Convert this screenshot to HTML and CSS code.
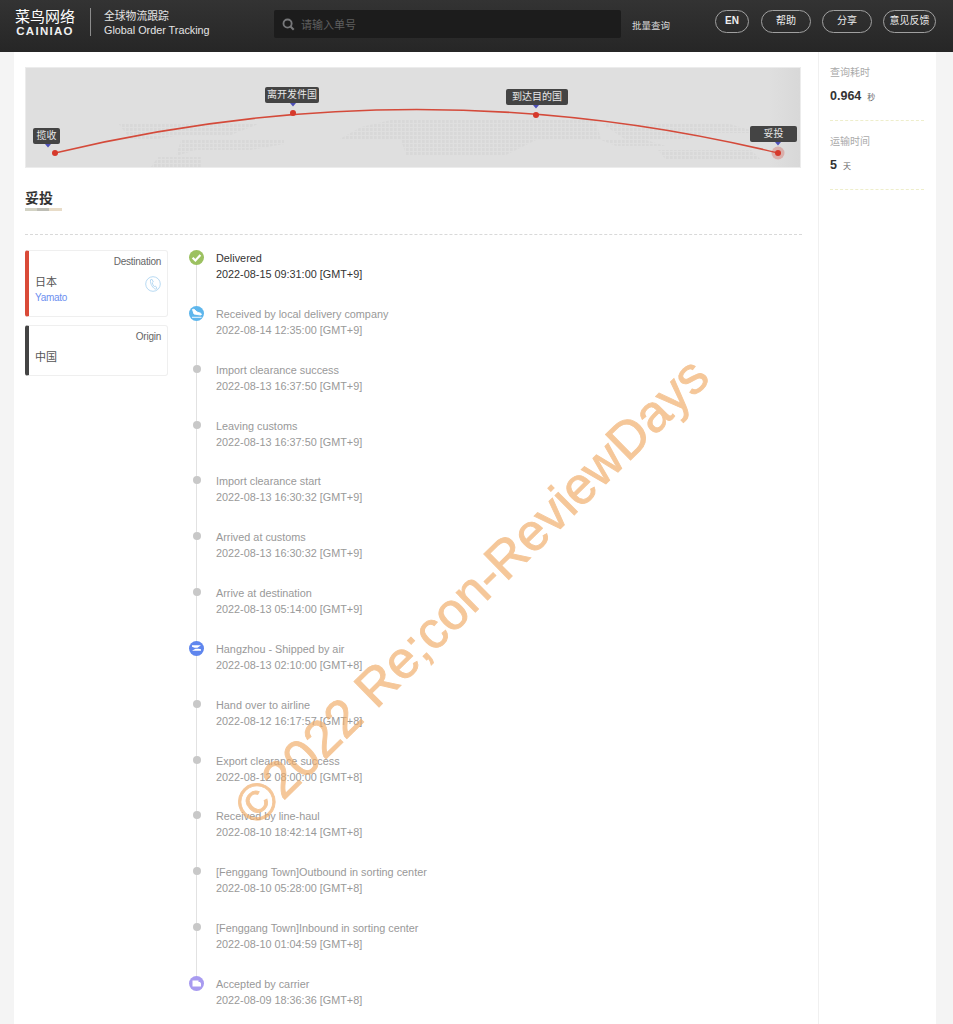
FILE: index.html
```html
<!DOCTYPE html>
<html lang="en">

<head>
    <meta charset="UTF-8">
    <meta name="viewport" content="width=device-width, initial-scale=1.0">
    <title>全球物流跟踪</title>
    <link rel="stylesheet" href="styles.css">
</head>

<body>
    <header class="topbar">
        <div class="logo">
            <span class="logo-cn">菜鸟网络</span>
            <span class="logo-en">CAINIAO</span>
        </div>
        <div class="product">
            <span>全球物流跟踪</span>
            <span>Global Order Tracking</span>
        </div>
        <div class="search">
            <svg class="search-icon" viewBox="0 0 14 14" width="13" height="13">
                <circle cx="6" cy="6" r="4.4" fill="none" stroke="#77787a" stroke-width="2" />
                <path d="M9.2 9.2 12.6 12.6" stroke="#77787a" stroke-width="2.2" />
            </svg>
            <span>请输入单号</span>
        </div>
        <a class="batch">批量查询</a>
        <nav class="top-buttons">
            <a class="pill pill-en">EN</a>
            <a class="pill">帮助</a>
            <a class="pill">分享</a>
            <a class="pill pill-wide">意见反馈</a>
        </nav>
    </header>

    <div class="page">
        <main class="content">
            <div class="map">
                <svg class="map-art" viewBox="0 0 775 100" width="775" height="100">
                    <defs>
                        <pattern id="dots" width="4" height="4" patternUnits="userSpaceOnUse">
                            <rect width="2.6" height="3" fill="#d8d8d8" />
                        </pattern>
                    </defs>
                    <g fill="url(#dots)">
                        <path d="M92 55H235L205 67H155L125 72H105Z" />
                        <path d="M155 72H258V76L225 82H170L150 88Z" />
                        <path d="M132 89H175V99H125Z" />
                        <path d="M312 72 335 59 365 52H570L575 72H510L480 87H380L375 72Z" />
                        <path d="M632 82H725L735 92H640Z" />
                        <path d="M575 55H700L735 65H680L660 72H600Z" />
                        <path d="M575 72H620L640 78H590Z" />
                    </g>
                    <path d="M29 85Q391 -2 752 85" fill="none" stroke="#d44a3a" stroke-width="1.600" />
                    <circle cx="752" cy="85" r="6.500" fill="#d44a3a" opacity="0.3" />
                    <circle cx="29" cy="85" r="3" fill="#d6392b" />
                    <circle cx="267" cy="45" r="3" fill="#d6392b" />
                    <circle cx="510" cy="47" r="3" fill="#d6392b" />
                    <circle cx="752" cy="85" r="3" fill="#d6392b" />
                    <g fill="#4d50b8">
                        <path d="M19 76h6l-3 3.500z" />
                        <path d="M264 35h6l-3 3.500z" />
                        <path d="M507 37h6l-3 3.500z" />
                        <path d="M749 74h6l-3 3.500z" />
                    </g>
                </svg>
                <span class="map-tag tag-pick">揽收</span>
                <span class="map-tag tag-leave">离开发件国</span>
                <span class="map-tag tag-arrive">到达目的国</span>
                <span class="map-tag tag-done">妥投</span>
            </div>

            <div class="status">
                <h2>妥投</h2>
                <div class="status-bar"></div>
            </div>

            <div class="detail">
                <aside class="places">
                    <div class="place place-dest">
                        <div class="place-type">Destination</div>
                        <div class="place-name">日本</div>
                        <div class="place-carrier">Yamato</div>
                        <svg class="place-phone" viewBox="0 0 16 16" width="16" height="16">
                            <circle cx="8" cy="8" r="7.300" fill="none" stroke="#b8daf3" />
                            <path d="M5.500 3.800 7 3.300 8.300 6 7.300 6.900C7.600 8.300 8.200 9.500 9.200 10.600L10.400 10 12 12.300 10.800 13.200C8 12.500 5 8 5.500 3.800Z" fill="none" stroke="#b8daf3" />
                        </svg>
                    </div>
                    <div class="place place-origin">
                        <div class="place-type">Origin</div>
                        <div class="place-name">中国</div>
                    </div>
                </aside>

                <ol class="timeline">
                    <li class="step step-current">
                        <span class="step-mark mark-green">
                            <svg viewBox="0 0 15 15" width="15" height="15"><path d="M3.600 7.800 6.400 10.500 11.400 5" fill="none" stroke="#fff" stroke-width="2.200" /></svg>
                        </span>
                        <p>Delivered</p>
                        <p>2022-08-15 09:31:00 [GMT+9]</p>
                    </li>
                    <li class="step">
                        <span class="step-mark mark-sky">
                            <svg viewBox="0 0 15 15" width="15" height="15"><path d="M3.500 3.500 5 3.200 8 6 11.500 7.200C13 8 12.500 9.200 11.300 9L5 8ZM3 11.300H12.500" fill="#fff" stroke="#fff" stroke-width="0.900" /></svg>
                        </span>
                        <p>Received by local delivery company</p>
                        <p>2022-08-14 12:35:00 [GMT+9]</p>
                    </li>
                    <li class="step"><span class="step-dot"></span><p>Import clearance success</p><p>2022-08-13 16:37:50 [GMT+9]</p></li>
                    <li class="step"><span class="step-dot"></span><p>Leaving customs</p><p>2022-08-13 16:37:50 [GMT+9]</p></li>
                    <li class="step"><span class="step-dot"></span><p>Import clearance start</p><p>2022-08-13 16:30:32 [GMT+9]</p></li>
                    <li class="step"><span class="step-dot"></span><p>Arrived at customs</p><p>2022-08-13 16:30:32 [GMT+9]</p></li>
                    <li class="step"><span class="step-dot"></span><p>Arrive at destination</p><p>2022-08-13 05:14:00 [GMT+9]</p></li>
                    <li class="step">
                        <span class="step-mark mark-blue">
                            <svg viewBox="0 0 15 15" width="15" height="15"><path d="M3 4.300H12L8.500 6.800H5.500L3 5.800ZM12 8.200V9.700H3L6.500 7.800H9.500Z" fill="#fff" /></svg>
                        </span>
                        <p>Hangzhou - Shipped by air</p>
                        <p>2022-08-13 02:10:00 [GMT+8]</p>
                    </li>
                    <li class="step"><span class="step-dot"></span><p>Hand over to airline</p><p>2022-08-12 16:17:57 [GMT+8]</p></li>
                    <li class="step"><span class="step-dot"></span><p>Export clearance success</p><p>2022-08-12 08:00:00 [GMT+8]</p></li>
                    <li class="step"><span class="step-dot"></span><p>Received by line-haul</p><p>2022-08-10 18:42:14 [GMT+8]</p></li>
                    <li class="step"><span class="step-dot"></span><p>[Fenggang Town]Outbound in sorting center</p><p>2022-08-10 05:28:00 [GMT+8]</p></li>
                    <li class="step"><span class="step-dot"></span><p>[Fenggang Town]Inbound in sorting center</p><p>2022-08-10 01:04:59 [GMT+8]</p></li>
                    <li class="step">
                        <span class="step-mark mark-violet">
                            <svg viewBox="0 0 15 15" width="15" height="15"><path d="M3.500 4.500H9.500V6H11L12 7.500V10.500H3.500Z" fill="#fff" /></svg>
                        </span>
                        <p>Accepted by carrier</p>
                        <p>2022-08-09 18:36:36 [GMT+8]</p>
                    </li>
                </ol>
            </div>
        </main>

        <aside class="stats">
            <div class="stat">
                <div class="stat-label">查询耗时</div>
                <div class="stat-value">0.964<small>秒</small></div>
            </div>
            <div class="stat">
                <div class="stat-label">运输时间</div>
                <div class="stat-value">5<small>天</small></div>
            </div>
        </aside>
    </div>

    <div class="watermark">©2022 Re;con-ReviewDays</div>
</body>

</html>
```

FILE: styles.css
```css
* {
    box-sizing: border-box;
}

html,
body {
    height: 1024px;
    overflow: hidden;
}

body {
    margin: 0;
    position: relative;
    background-color: #f4f4f4;
    font-family: "Liberation Sans", "Noto Sans CJK SC", sans-serif;
    font-size: 12px;
    color: #333;
}

.topbar {
    height: 52px;
    background: linear-gradient(#333333, #262626);
    display: flex;
    align-items: flex-start;
    color: #fff;
}

.logo {
    margin: 8px 0 0 15px;
    width: 60px;
    display: flex;
    flex-direction: column;
    align-items: center;
    white-space: nowrap;
}

.logo-cn {
    font-size: 15px;
    line-height: 17px;
}

.logo-en {
    font-size: 11.5px;
    line-height: 12px;
    font-weight: bold;
    letter-spacing: 1.3px;
    color: #f0f0f0;
}

.product {
    margin: 8px 0 0 15px;
    padding: 1px 0 0 13px;
    height: 28px;
    width: 184px;
    border-left: 1px solid #8c8c8c;
    display: flex;
    flex-direction: column;
    font-size: 10.800px;
    line-height: 14px;
    color: #e4e4e4;
}

.search {
    margin-top: 10px;
    width: 347px;
    height: 28px;
    border-radius: 2px;
    background-color: #1c1c1c;
    display: flex;
    align-items: center;
    padding-left: 8px;
    color: #5f5f5f;
    font-size: 11px;
    gap: 6px;
}

.batch {
    margin: 18px 0 0 11px;
    width: 46px;
    font-size: 9.500px;
    white-space: nowrap;
    color: #d8d8d8;
}

.top-buttons {
    margin: 10px 0 0 37px;
    display: flex;
    gap: 11px;
}

.pill {
    width: 50px;
    height: 23px;
    line-height: 20px;
    border: 1px solid #a0a0a0;
    border-radius: 12px;
    text-align: center;
    font-size: 10px;
    color: #eee;
}

.pill-en {
    width: 34px;
    margin-right: 1px;
    font-weight: bold;
}

.pill-wide {
    width: 53px;
    white-space: nowrap;
}

.page {
    margin-left: 14px;
    width: 922px;
    height: 972px;
    background-color: #fff;
    display: flex;
}

.content {
    width: 805px;
    padding: 15px 0 0 11px;
    border-right: 1px solid #f0f0f0;
}

.map {
    position: relative;
    width: 776px;
    height: 101px;
    background: linear-gradient(90deg, #dfdfdf 96%, #d8d8d8);
    border: 1px solid #ececec;
    overflow: hidden;
}

.map-art {
    display: block;
}

.map-tag {
    position: absolute;
    height: 16px;
    line-height: 15px;
    background-color: #444;
    border-radius: 2px;
    color: #e8e8e8;
    font-size: 10px;
    white-space: nowrap;
    text-align: center;
}

.tag-pick {
    left: 7px;
    top: 60px;
    width: 27px;
}

.tag-leave {
    left: 239px;
    top: 19px;
    width: 54px;
}

.tag-arrive {
    left: 480px;
    top: 21px;
    width: 62px;
}

.tag-done {
    left: 724px;
    top: 58px;
    width: 47px;
}

.status {
    width: 777px;
    height: 67px;
    border-bottom: 1px dashed #d9d9d9;
}

.status h2 {
    margin: 0;
    padding-top: 21px;
    font-size: 14px;
    line-height: 19px;
    font-weight: bold;
    color: #333;
}

.status-bar {
    width: 37px;
    height: 3px;
    background: linear-gradient(90deg, #d3d3c4 0 33%, #bdbdb4 33% 66%, #e8dcc8 66%);
}

.detail {
    display: flex;
    padding-top: 15px;
}

.places {
    width: 143px;
    display: flex;
    flex-direction: column;
    gap: 8px;
}

.place {
    position: relative;
    border: 1px solid #efefef;
    border-left: 4px solid #444;
    border-radius: 3px;
    padding: 4px 6px 0 6px;
}

.place-dest {
    height: 67px;
    border-left-color: #d94a38;
}

.place-origin {
    height: 51px;
}

.place-type {
    text-align: right;
    font-size: 10px;
    letter-spacing: -0.250px;
    line-height: 13px;
    color: #666;
}

.place-name {
    margin-top: 7px;
    font-size: 11px;
    line-height: 15px;
    color: #555;
}

.place-carrier {
    font-size: 10px;
    letter-spacing: -0.300px;
    line-height: 15px;
    color: #6d8ff0;
}

.place-phone {
    position: absolute;
    right: 6px;
    top: 25px;
}

.timeline {
    list-style: none;
    margin: 0;
    padding: 0 0 0 48px;
}

.step {
    position: relative;
    height: 55.850px;
    color: #999;
    font-size: 10.850px;
    line-height: 16px;
}

.step p {
    margin: 0;
}

.step-current {
    color: #333;
}

.step::before {
    content: "";
    position: absolute;
    left: -20px;
    top: 0;
    bottom: -1px;
    width: 1px;
    background-color: #e2e2e2;
}

.step:last-child::before {
    display: none;
}

.step-mark {
    position: absolute;
    left: -27px;
    top: 0;
    width: 15px;
    height: 15px;
    border-radius: 50%;
}

.step-mark svg {
    display: block;
}

.mark-green {
    background-color: #9cc161;
}

.mark-sky {
    background-color: #5eb6ec;
}

.mark-blue {
    background-color: #5f86ee;
}

.mark-violet {
    background-color: #a89bf0;
}

.step-dot {
    position: absolute;
    left: -23.500px;
    top: 3px;
    width: 8px;
    height: 8px;
    border-radius: 50%;
    background-color: #c8c8c8;
}

.stats {
    padding: 14px 12px 0 11px;
    flex: 1;
}

.stat {
    height: 55px;
    border-bottom: 1px dashed #eeeecb;
    margin-bottom: 14px;
}

.stat-label {
    font-size: 10px;
    line-height: 13px;
    color: #aaa;
}

.stat-value {
    margin-top: 9px;
    font-size: 12.500px;
    line-height: 16px;
    font-weight: bold;
    color: #333;
}

.stat-value small {
    margin-left: 6px;
    font-size: 8px;
    font-weight: normal;
    color: #666;
}

.watermark {
    position: absolute;
    left: 160px;
    top: 582px;
    width: 580px;
    font-size: 52px;
    line-height: 60px;
    white-space: nowrap;
    color: #f0aa64;
    -webkit-text-stroke: 0.9px #f0aa64;
    opacity: 0.65;
    transform: rotate(-44.500deg);
    pointer-events: none;
}
```
